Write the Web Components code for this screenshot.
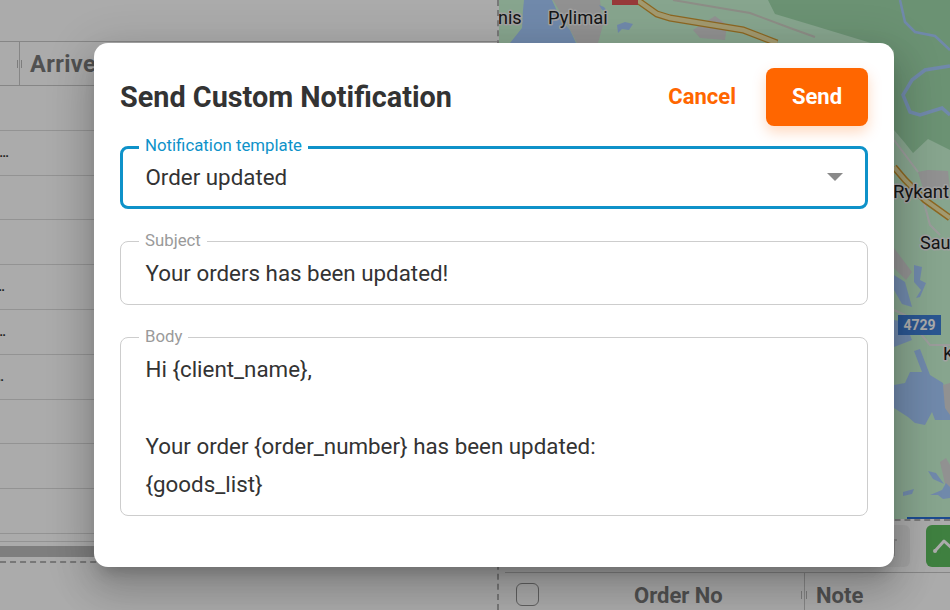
<!DOCTYPE html>
<html>
<head>
<meta charset="utf-8">
<title>Send Custom Notification</title>
<style>
    html, body { margin: 0; padding: 0; height: 100%; overflow: hidden; background: #fff; font-family: Roboto, "Liberation Sans", sans-serif; }
</style>
</head>
<body>
<app-shell>
    <arrived-table slot="left"></arrived-table>
    <map-view slot="right"></map-view>
    <map-toolbar slot="right"></map-toolbar>
    <order-table slot="right"></order-table>
    <notification-dialog slot="dialog"></notification-dialog>
</app-shell>

<script>
class AppShell extends HTMLElement {
    constructor() {
        super();
        this.attachShadow({mode: "open"});
    }

    connectedCallback() {
        this.shadowRoot.innerHTML = `
        <style>
        :host { display: block; position: relative; width: 950px; height: 610px; overflow: hidden; background: #fff; }
        .panes { display: grid; grid-template-columns: 497px 1fr; height: 100%; }
        .left { display: flex; flex-direction: column; min-width: 0; }
        .right { display: flex; flex-direction: column; min-width: 0; border-left: 2px dashed #b4b4b4; overflow: hidden; }
        .backdrop { position: absolute; inset: 0; background: rgba(0,0,0,.33); display: flex; align-items: flex-start; justify-content: flex-start; padding: 43px 0 0 94px; box-sizing: border-box; }
        </style>
        <div class="panes">
            <div class="left"><slot name="left"></slot></div>
            <div class="right"><slot name="right"></slot></div>
        </div>
        <div class="backdrop"><slot name="dialog"></slot></div>
        `;
    }
}
customElements.define("app-shell", AppShell);

class ArrivedTable extends HTMLElement {
    constructor() {
        super();
        this.attachShadow({mode: "open"});
    }

    connectedCallback() {
        // end of the dots in each row, the text itself is cut by the window edge
        const dots = [0, 9, 0, 0, 5, 6, 4, 0, 0, 0];
        const rows = dots.map(d => `<div class="row">${d ? `<span class="cut" style="width:${d}px">…</span>` : ""}</div>`).join("");

        this.shadowRoot.innerHTML = `
        <style>
        :host { display: block; flex: none; padding-top: 41px; box-sizing: border-box; border-bottom: 2px dashed #b4b4b4; height: 563px; overflow: hidden; }
        .head { display: flex; border-top: 1px solid #c8c8c8; border-bottom: 1px solid #c8c8c8; box-sizing: border-box; height: 45px; }
        .first { position: relative; width: 19px; border-right: 1px solid #c8c8c8; }
        .first::after { content: ""; position: absolute; right: -3px; top: 18px; width: 3px; height: 8px; border-left: 1px solid #bbb; border-right: 1px solid #bbb; }
        .title { padding-left: 10px; font: 700 23.5px/45px Roboto, sans-serif; letter-spacing: .4px; color: #7a7a7a; white-space: nowrap; }
        .row { height: 44.8px; box-sizing: border-box; border-bottom: 1px solid #dcdcdc; display: flex; align-items: center; }
        .cut { display: flex; justify-content: flex-end; font: 700 13px/16px Roboto, sans-serif; color: #333; white-space: nowrap; }
        .foot { height: 8px; border-bottom: 1px solid #dcdcdc; box-sizing: border-box; }
        .scroll { margin-top: 4px; height: 11px; background: #bdbdbd; }
        </style>
        <div class="head"><div class="first"></div><div class="title">Arrived</div></div>
        ${rows}
        <div class="foot"></div>
        <div class="scroll"></div>
        `;
    }
}
customElements.define("arrived-table", ArrivedTable);

class MapView extends HTMLElement {
    constructor() {
        super();
        this.attachShadow({mode: "open"});
    }

    connectedCallback() {
        this.shadowRoot.innerHTML = `
        <style>
        :host { display: block; flex: none; height: 519px; border-bottom: 2px dashed #b4b4b4; overflow: hidden; }
        svg { display: block; width: 451px; height: 519px; }
        text { font-family: Roboto, sans-serif; fill: #222; paint-order: stroke; stroke: #f0f0f0; stroke-width: 3px; stroke-linejoin: round; }
        </style>
        <svg viewBox="499 0 451 519" xmlns="http://www.w3.org/2000/svg">
            <rect x="499" y="0" width="451" height="519" fill="#c9f6d4"/>
            <polygon fill="#a0daac" points="768,0 775,14 815,26 894,50 894,130 905,143 913,153 928,139 950,150 950,0"/>
            <polygon fill="#d8d8d8" points="553,0 600,0 603,25 598,43 577,43 565,20"/>
            <polygon fill="#a8ccff" points="524,0 552,0 560,18 570,30 576,43 510,43 522,28 523,10"/>
            <polygon fill="#a8ccff" points="617,25 625,22 633,24 629,30 622,29 618,33"/>
            <polygon fill="#a8ccff" points="599,5 604,7 607,11 602,10"/>
            <polygon fill="#d8d8d8" points="693,30 715,16 727,25 725,40 700,38"/>
            <polyline fill="none" stroke="#d2d2c8" stroke-width="2" points="673,0 720,8 750,13 790,28 815,37"/>
            <polyline fill="none" stroke="#d29a32" stroke-width="7" points="637,0 657,14 670,18 743,30 777,43"/>
            <polyline fill="none" stroke="#f2e6a8" stroke-width="4.5" points="637,0 657,14 670,18 743,30 777,43"/>
            <rect x="612" y="0" width="26" height="5" fill="#e25555"/>
            <polyline fill="none" stroke="#a8ccff" stroke-width="2.5" points="900,0 905,22 915,32 935,36 950,50"/>
            <polyline fill="none" stroke="#a8ccff" stroke-width="3.5" points="950,66 925,70 912,80 903,95 910,112 920,115 942,108 950,115"/>

            <polygon fill="#d8d8d8" points="918,172 928,170 948,171 950,190 935,200 925,195"/>
            <polyline fill="none" stroke="#e8e8e8" stroke-width="2" points="894,140 918,172"/>
            <polyline fill="none" stroke="#e8e8e8" stroke-width="2" points="922,195 930,225 940,235"/>
            <polyline fill="none" stroke="#d29a32" stroke-width="7" points="894,167 905,180 925,200 950,218"/>
            <polyline fill="none" stroke="#f2e6a8" stroke-width="4" points="894,167 905,180 925,200 950,218"/>
            <polygon fill="#d8d8d8" points="894,248 912,272 906,280 894,268"/>
            <polygon fill="#a8ccff" points="914,265 922,267 920,280 926,283 920,297 916,298 921,290 914,282"/>
            <polygon fill="#a8ccff" points="894,275 905,282 912,307 902,304 894,290"/>
            <polyline fill="none" stroke="#e8e8e8" stroke-width="2" points="894,310 905,315 930,345 950,345"/>
            <polygon fill="#a8ccff" points="894,320 905,322 912,340 894,347"/>
            <polygon fill="#a8ccff" points="914,351 920,349 930,375 943,383 948,400 950,410 950,420 935,420 932,412 925,425 915,423 908,417 894,408 894,385 905,383 910,372 922,372"/>
            <polygon fill="#d8d8d8" points="943,385 950,383 950,415 945,408"/>
            <polygon fill="#d8d8d8" points="940,462 946,458 950,465 950,490 946,488"/>
            <polygon fill="#a8ccff" points="928,471 936,473 944,484 933,479"/>
            <polygon fill="#a8ccff" points="903,492 914,489 912,494 903,496"/>
            <polygon fill="#a8ccff" points="930,495 942,490 946,483 950,487 950,498 943,499 938,495"/>
            <rect x="907" y="517" width="43" height="2" fill="#2a70d8"/>

            <text x="498" y="24" font-size="18">nis</text>
            <text x="548" y="24" font-size="18.3">Pylimai</text>
            <text x="893" y="198" font-size="18.6">Rykant</text>
            <text x="920" y="249" font-size="18">Sau</text>
            <text x="943" y="360" font-size="18">K</text>
            <rect x="898" y="315" width="43" height="20" fill="#3f80d8"/>
            <text x="919.5" y="330" font-size="14" font-weight="700" text-anchor="middle" style="fill:#fff;stroke:none">4729</text>
        </svg>
        `;
    }
}
customElements.define("map-view", MapView);

class MapToolbar extends HTMLElement {
    constructor() {
        super();
        this.attachShadow({mode: "open"});
    }

    connectedCallback() {
        this.shadowRoot.innerHTML = `
        <style>
        :host { display: flex; flex: none; justify-content: flex-start; gap: 16px; height: 51px; box-sizing: border-box; padding: 4px 0 5px 351px; overflow: hidden; }
        button { flex: none; width: 60px; height: 42px; border: 0; padding: 0; border-radius: 6px; display: flex; align-items: center; justify-content: center; }
        .grey { background: #f2f2f2; justify-content: flex-end; padding-right: 12px; box-sizing: border-box; }
        .green { background: #5fbf60; width: 50px; justify-content: flex-start; padding-left: 6px; }
        </style>
        <button class="grey" aria-label="Delete">
            <svg width="20" height="22" viewBox="0 0 20 22" fill="none" stroke="#c8c8c8" stroke-width="2"><path d="M1 5h18M4 5v15h12V5M7 5V2h6v3M8 9v7M12 9v7"/></svg>
        </button>
        <button class="green" aria-label="Route">
            <svg width="24" height="20" viewBox="0 0 24 20" fill="none" stroke="#fff" stroke-width="3" stroke-linejoin="round"><path d="M3 15L12 5l10 9"/><circle cx="3" cy="15" r="2" fill="#fff" stroke="none"/></svg>
        </button>
        `;
    }
}
customElements.define("map-toolbar", MapToolbar);

class OrderTable extends HTMLElement {
    constructor() {
        super();
        this.attachShadow({mode: "open"});
    }

    connectedCallback() {
        this.shadowRoot.innerHTML = `
        <style>
        :host { display: flex; flex: none; margin-left: 6px; height: 46px; border-top: 1px solid #c8c8c8; box-sizing: border-box; font: 700 22px/45px Roboto, sans-serif; color: #7a7a7a; }
        .check { flex: none; width: 23px; height: 23px; margin: 10px 0 0 11px; border: 1px solid #8f8f8f; border-radius: 6px; box-sizing: border-box; }
        .no { position: relative; width: 266px; box-sizing: border-box; padding-left: 95px; border-right: 1px solid #c8c8c8; white-space: nowrap; }
        .no::after { content: ""; position: absolute; right: -3px; top: 18px; width: 4px; height: 8px; border-left: 1px solid #bbb; border-right: 1px solid #bbb; }
        .note { padding-left: 11px; }
        </style>
        <div class="check"></div>
        <div class="no">Order No</div>
        <div class="note">Note</div>
        `;
    }
}
customElements.define("order-table", OrderTable);

class OutlinedField extends HTMLElement {
    constructor() {
        super();
        this.attachShadow({mode: "open"});
    }

    connectedCallback() {
        const focused = this.hasAttribute("focused");
        this.shadowRoot.innerHTML = `
        <style>
        :host { display: block; --line: ${focused ? "#0e92c9" : "#cdcdcd"}; --label: ${focused ? "#0e92c9" : "#9a9a9a"}; --w: ${focused ? 3 : 1}px; }
        fieldset { margin: 0; padding: 0 calc(25px - var(--w)) 0 calc(25.5px - var(--w)); border: var(--w) solid var(--line); border-radius: 8px; min-width: 0; }
        legend { margin-left: -6.5px; padding: 0 6px 4px; font: 16.8px/18px Roboto, sans-serif; color: var(--label); white-space: nowrap; }
        .content { display: flex; align-items: flex-start; justify-content: space-between; margin-top: -4px; font: 22.35px/38.4px Roboto, sans-serif; color: #333; }
        </style>
        <fieldset>
            <legend>${this.getAttribute("label")}</legend>
            <div class="content"><slot></slot></div>
        </fieldset>
        `;
    }
}
customElements.define("outlined-field", OutlinedField);

class NotificationDialog extends HTMLElement {
    constructor() {
        super();
        this.attachShadow({mode: "open"});
    }

    connectedCallback() {
        this.shadowRoot.innerHTML = `
        <style>
        :host { display: block; width: 800px; height: 524px; box-sizing: border-box; padding: 25px 26px; background: #fff; border-radius: 14px;
            box-shadow: 0 11px 15px -7px rgba(0,0,0,.2), 0 24px 38px 3px rgba(0,0,0,.14), 0 9px 46px 8px rgba(0,0,0,.12); }
        header { display: flex; align-items: center; height: 58px; }
        h2 { flex: 1; margin: 0; font: 700 28.8px/34px Roboto, sans-serif; color: #333; white-space: nowrap; }
        button { font: 700 22px/26px Roboto, sans-serif; border: 0; background: none; padding: 0; }
        .cancel { color: #ff6600; margin-right: 30px; }
        .send { width: 102px; height: 58px; border-radius: 8px; background: #ff6600; color: #fff; box-shadow: 0 6px 14px rgba(255,102,0,.25); }
        .fields { display: flex; flex-direction: column; gap: 21.5px; margin-top: 10px; }
        .caret { width: 0; height: 0; border-left: 8px solid transparent; border-right: 8px solid transparent; border-top: 8px solid #8a8a8a; margin-top: 19px; }
        .select { padding: 3.8px 0 9.8px; flex: 1; }
        .subject { padding: 5.3px 0 11.8px; flex: 1; }
        .body { padding: 5.3px 0 11.6px; white-space: pre-line; }
        </style>
        <header>
            <h2>Send Custom Notification</h2>
            <button class="cancel">Cancel</button>
            <button class="send">Send</button>
        </header>
        <div class="fields">
            <outlined-field label="Notification template" focused>
                <span class="select">Order updated</span><span class="caret"></span>
            </outlined-field>
            <outlined-field label="Subject">
                <span class="subject">Your orders has been updated!</span>
            </outlined-field>
            <outlined-field label="Body">
                <div class="body">Hi {client_name},

                Your order {order_number} has been updated:
                {goods_list}</div>
            </outlined-field>
        </div>
        `;
    }
}
customElements.define("notification-dialog", NotificationDialog);
</script>
</body>
</html>
